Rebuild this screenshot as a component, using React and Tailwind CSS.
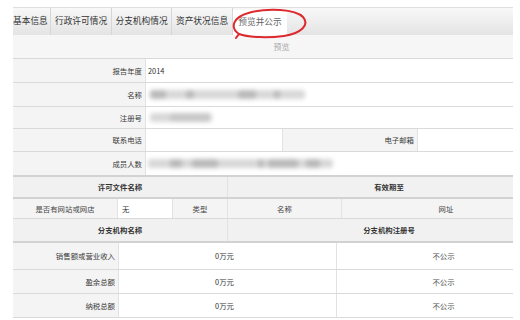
import React from "react";

const tabs = [
  { label: "基本信息", w: "w-[38px]", cls: "justify-start" },
  { label: "行政许可情况", w: "w-[61px]", cls: "justify-center" },
  { label: "分支机构情况", w: "w-[60px]", cls: "justify-center" },
  { label: "资产状况信息", w: "w-[61px]", cls: "justify-center" },
];

function Cell({ w, className = "", children }) {
  return (
    <div className={`${w} h-full flex items-center border-r border-[#e2e2e2] ${className}`}>
      {children}
    </div>
  );
}

// redacted text in the screenshot: a soft grey strip with darker patches on it
function Smudge({ w, spots = [] }) {
  return (
    <div className={`relative ${w} h-[9px] bg-[#d8d8d8] rounded-[3px] blur-[2px]`}>
      {spots.map((s, i) => (
        <div key={i} className={`absolute top-0 h-full rounded-[3px] bg-[#bababa] ${s}`} />
      ))}
    </div>
  );
}

export default function App() {
  const label = "bg-[#f4f4f4] justify-end pr-[3px] text-[#3a3a3a]";
  const head = "bg-[#f1f1f1] justify-center font-bold text-[#333]";
  const gray = "bg-[#f4f4f4] justify-center text-[#444]";

  return (
    <div className="w-[520px] h-[320px] bg-white overflow-hidden relative font-['Noto_Sans_CJK_SC',sans-serif]">
      <div className="pt-[7px] pl-[13px]">
        <div className="w-[500px] overflow-hidden">
          <div className="w-[537px] text-[7.4px] leading-none">
            {/* tab bar */}
            <div className="h-[28px] border-t border-[#dedede] bg-linear-to-b from-[#f8f8f8] to-[#e4e4e4] flex text-[8.7px] text-[#333]">
              {tabs.map((t) => (
                <div key={t.label} className={`${t.w} h-full flex items-center ${t.cls} border-r border-[#d6d6d6]`}>
                  {t.label}
                </div>
              ))}
              <div className="w-[54px] h-[25px] self-end bg-white flex items-center justify-center text-[#666]">
                预览并公示
              </div>
            </div>

            {/* preview row */}
            <div className="h-[24px] bg-[#f6f6f7] border-b border-[#d9d9d9] flex items-center justify-center text-[8px] text-[#a8a8a8]">
              预览
            </div>

            {/* 报告年度 */}
            <div className="h-[24px] flex border-b border-[#dadada]">
              <Cell w="w-[133px]" className={label}>报告年度</Cell>
              <div className="flex-1 flex items-center pl-[2px] text-[#333]">2014</div>
            </div>

            {/* 名称 */}
            <div className="h-[24px] flex border-b border-[#dadada]">
              <Cell w="w-[133px]" className={label}>名称</Cell>
              <div className="flex-1 flex items-center pl-[4px]">
                <Smudge
                  w="w-[155px]"
                  spots={["left-0 w-[16px]", "left-[36px] w-[8px]", "left-[88px] w-[18px]", "left-[124px] w-[6px]"]}
                />
              </div>
            </div>

            {/* 注册号 */}
            <div className="h-[22px] flex border-b border-[#dadada]">
              <Cell w="w-[133px]" className={label}>注册号</Cell>
              <div className="flex-1 flex items-center pl-[4px]">
                <Smudge w="w-[62px]" spots={["left-[20px] w-[40px] bg-[#c8c8c8]"]} />
              </div>
            </div>

            {/* 联系电话 / 电子邮箱 */}
            <div className="h-[23px] flex border-b border-[#dadada]">
              <Cell w="w-[133px]" className={label}>联系电话</Cell>
              <Cell w="w-[137px]" className="bg-white" />
              <Cell w="w-[135px]" className={label}>电子邮箱</Cell>
              <div className="flex-1 bg-white" />
            </div>

            {/* 成员人数 */}
            <div className="h-[25px] flex border-b-2 border-[#d2d2d2]">
              <Cell w="w-[133px]" className={label}>成员人数</Cell>
              <div className="flex-1 flex items-center pl-[2px]">
                <Smudge
                  w="w-[185px]"
                  spots={[
                    "left-[22px] w-[12px]",
                    "left-[44px] w-[26px]",
                    "left-[110px] w-[6px]",
                    "left-[120px] w-[30px]",
                    "left-[158px] w-[14px]",
                  ]}
                />
              </div>
            </div>

            {/* 许可文件名称 / 有效期至 */}
            <div className="h-[22px] flex border-b-2 border-[#d2d2d2]">
              <Cell w="w-[215px]" className={head}>许可文件名称</Cell>
              <div className={`flex-1 flex items-center ${head}`}>有效期至</div>
            </div>

            {/* 网站 */}
            <div className="h-[20px] flex border-b border-[#dadada]">
              <Cell w="w-[105px]" className={gray}>是否有网站或网店</Cell>
              <Cell w="w-[55px]" className="bg-white pl-[4px] text-[#333]">无</Cell>
              <Cell w="w-[55px]" className={gray}>类型</Cell>
              <Cell w="w-[114px]" className={gray}>名称</Cell>
              <div className={`flex-1 flex items-center ${gray}`}>网址</div>
            </div>

            {/* 分支机构 */}
            <div className="h-[24px] flex border-b-2 border-[#d2d2d2]">
              <Cell w="w-[215px]" className={head}>分支机构名称</Cell>
              <div className={`flex-1 flex items-center ${head}`}>分支机构注册号</div>
            </div>

            {[
              ["销售额或营业收入", "h-[27px]"],
              ["盈余总额", "h-[24px]"],
              ["纳税总额", "h-[24px]"],
            ].map(([name, h]) => (
              <div key={name} className={`${h} flex border-b border-[#dadada]`}>
                <Cell w="w-[106px]" className={label}>{name}</Cell>
                <Cell w="w-[218px]" className="bg-white justify-center pr-[6px] text-[#333]">0万元</Cell>
                <div className="flex-1 flex items-center justify-center text-[#555]">不公示</div>
              </div>
            ))}
          </div>
        </div>
      </div>

      {/* red hand-drawn circle */}
      <svg className="absolute left-[227px] top-[7px]" width="84" height="34" viewBox="0 0 84 34" fill="none">
        <path
          d="M12 27 C3 21 5 10 23 5.5 C41 1 68 2 76 10 C83 18 74 26.5 57 29 C41 31 22 30.5 12 27 L9 31"
          stroke="#dc2a2e"
          strokeWidth="2"
          strokeLinecap="round"
        />
      </svg>
    </div>
  );
}
